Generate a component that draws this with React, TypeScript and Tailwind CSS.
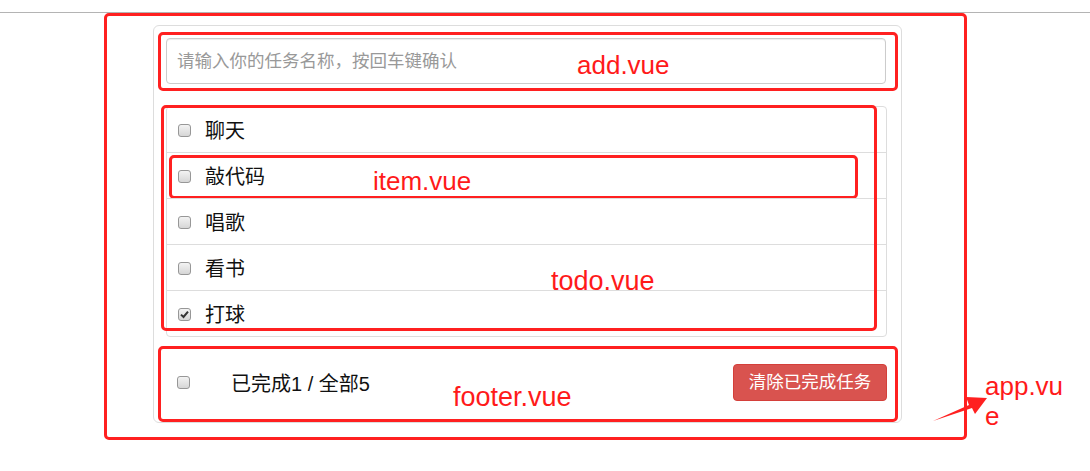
import React from "react";

const todos = [
  { id: 1, title: "聊天", done: false },
  { id: 2, title: "敲代码", done: false },
  { id: 3, title: "唱歌", done: false },
  { id: 4, title: "看书", done: false },
  { id: 5, title: "打球", done: true },
];

const cjk = "font-['Microsoft_YaHei','Liberation_Sans','Noto_Sans_CJK_SC',sans-serif]";

// red annotation frame drawn over a section
function Frame({ className }: { className: string }) {
  return <div className={`pointer-events-none absolute rounded-[5px] border-[3px] border-[#ff2020] ${className}`} />;
}

function Label({ className, children }: { className: string; children: React.ReactNode }) {
  return (
    <div className={`pointer-events-none absolute font-['Liberation_Sans',sans-serif] text-[26px] leading-[26px] text-[#ff1a1a] ${className}`}>
      {children}
    </div>
  );
}

function Check({ checked }: { checked: boolean }) {
  return (
    <span className="flex h-[13px] w-[13px] shrink-0 items-center justify-center rounded-[3px] border border-[#979797] bg-linear-to-b from-[#f3f3f3] to-[#d6d6d6]">
      {checked && (
        <svg width="9" height="9" viewBox="0 0 9 9">
          <path d="M1 4.6 L3.5 7 L8 1.6" fill="none" stroke="#333" strokeWidth="2" />
        </svg>
      )}
    </span>
  );
}

export default function App() {
  const doneCount = todos.filter((t) => t.done).length;
  return (
    <div className={`relative h-[471px] w-[1090px] overflow-hidden bg-white ${cjk}`}>
      <div className="h-[13px] border-b border-[#b4b4b4]" />

      {/* app.vue */}
      <div className="ml-[104px] h-[427px] w-[863px] rounded-[5px] border-[3px] border-[#ff2020] pt-[9px] pl-[46px]">
        <div className="w-[749px] rounded-[6px] border border-[#dddddd] pt-[12px] pl-[12px] pr-[14px] pb-[21px]">
          {/* add.vue */}
          <div className="relative w-[720px]">
            <input
              className="block h-[46px] w-full rounded-[4px] border border-[#cccccc] px-[10px] text-[17.5px] text-[#555] shadow-[inset_0_1px_1px_rgba(0,0,0,0.075)] outline-none placeholder:text-[#999]"
              placeholder="请输入你的任务名称，按回车键确认"
            />
            <Frame className="-left-[8px] -right-[12px] -top-[6px] -bottom-[7px]" />
            <Label className="left-[411px] top-[14px]">add.vue</Label>
          </div>

          {/* todo.vue */}
          <div className="relative mt-[22px]">
            <ul className="rounded-[4px] border border-[#dddddd]">
              {todos.map((t, i) => (
                <li
                  key={t.id}
                  className={`relative flex items-center gap-[14px] pl-[11px] pt-[2px] text-[20px] text-[#111] ${i > 0 ? "h-[46px] border-t border-[#dddddd]" : "h-[45px]"}`}
                >
                  <Check checked={t.done} />
                  <span>{t.title}</span>
                  {i === 1 && (
                    <>
                      <Frame className="left-[2px] right-[28px] top-[2px] -bottom-[1px]" />
                      <Label className="left-[206px] top-[15px]">item.vue</Label>
                    </>
                  )}
                </li>
              ))}
            </ul>
            <Frame className="-left-[5px] right-[10px] -top-[1px] bottom-[6px]" />
            <Label className="left-[385px] top-[162px] text-[27px]">todo.vue</Label>
          </div>

          {/* footer.vue */}
          <div className="relative mt-[27px] flex h-[37px] items-center pl-[11px]">
            <Check checked={false} />
            <span className="ml-[41px] pt-[3px] text-[20px] text-[#111]">
              已完成{doneCount} / 全部{todos.length}
            </span>
            <button className="ml-auto h-[37px] w-[154px] rounded-[4px] border border-[#d43f3a] bg-[#d9534f] text-[17.5px] text-white">
              清除已完成任务
            </button>
            <Frame className="-left-[8px] -right-[11px] -top-[18px] -bottom-[21px]" />
            <Label className="left-[287px] top-[20px] text-[27px]">footer.vue</Label>
          </div>
        </div>
      </div>

      <Label className="left-[985px] top-[371px] leading-[30px]">
        app.vu
        <br />e
      </Label>

      {/* arrow pointing at the app frame */}
      <svg className="absolute left-[930px] top-[394px]" width="60" height="30" viewBox="930 394 60 30">
        <polygon points="933,421 969,405 966,397 987,398 975,414 972,408" fill="#ff2020" />
      </svg>
    </div>
  );
}
